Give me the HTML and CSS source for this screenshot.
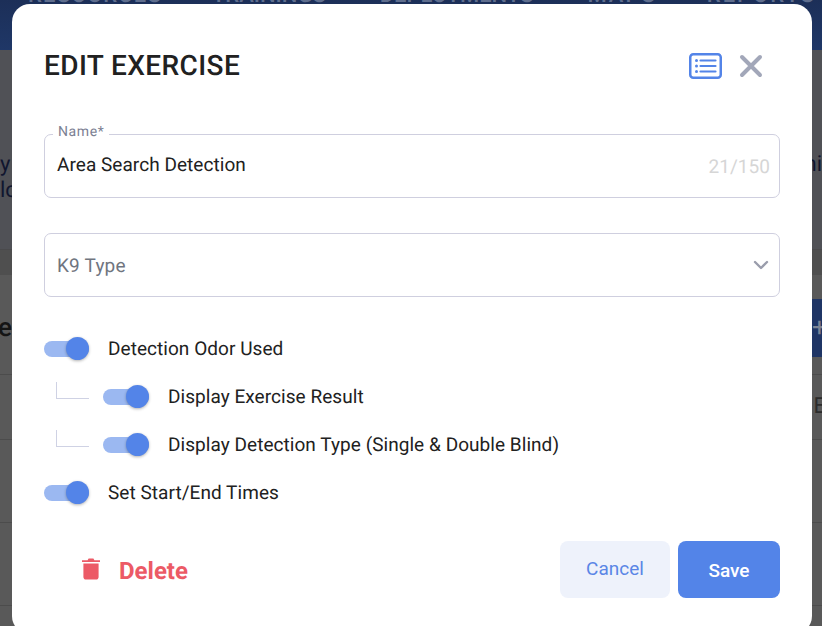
FILE: index.html
```html
<!DOCTYPE html>
<html lang="en">
<head>
    <meta charset="UTF-8">
    <meta name="viewport" content="width=device-width, initial-scale=1.0">
    <title>Edit Exercise</title>
    <link rel="stylesheet" href="styles.css">
</head>
<body>
    <div class="page">
        <header class="topbar">
            <span class="navItem nav1">RESOURCES</span>
            <span class="navItem nav2">TRAININGS</span>
            <span class="navItem nav3">DEPLOYMENTS</span>
            <span class="navItem nav4">MAPS</span>
            <span class="navItem nav5">REPORTS</span>
        </header>
        <section class="banner">
            <div class="bannerRow rowOne"><span>y</span><span class="clipRight">ni</span></div>
            <div class="bannerRow"><span>lc</span></div>
        </section>
        <section class="tableHead">
            <span class="sectionTitle">er</span>
            <span class="addBtn">+</span>
        </section>
        <div class="tableRow"><span></span><span class="cellEnd">E</span></div>
        <div class="tableRow short"></div>
        <div class="tableRow short"></div>
    </div>

    <div class="modal">
        <div class="modalHead">
            <h1>EDIT EXERCISE</h1>
            <div class="headIcons">
                <svg class="listIcon" width="33" height="26" viewBox="0 0 33 26" fill="none">
                    <rect x="1.25" y="1.25" width="30.5" height="23.5" rx="3" stroke="#5384e8" stroke-width="2.5"/>
                    <circle cx="7.5" cy="7.5" r="1.5" fill="#5384e8"/>
                    <circle cx="7.5" cy="13" r="1.5" fill="#5384e8"/>
                    <circle cx="7.5" cy="18.5" r="1.5" fill="#5384e8"/>
                    <path d="M11.5 7.5H26.5M11.5 13H26.5M11.5 18.5H26.5" stroke="#5384e8" stroke-width="2.2" stroke-linecap="round"/>
                </svg>
                <svg class="closeIcon" width="24" height="24" viewBox="0 0 24 24" fill="none">
                    <path d="M3 3L21 21M21 3L3 21" stroke="#a2a7b9" stroke-width="4" stroke-linecap="round"/>
                </svg>
            </div>
        </div>

        <div class="field nameField">
            <label class="floatLabel">Name*</label>
            <span class="fieldValue">Area Search Detection</span>
            <span class="counter">21/150</span>
        </div>

        <div class="field selectField">
            <span class="placeholder">K9 Type</span>
            <svg width="16" height="10" viewBox="0 0 16 10" fill="none">
                <path d="M2 2L8 8L14 2" stroke="#9a9dac" stroke-width="2.4" stroke-linecap="round" stroke-linejoin="round"/>
            </svg>
        </div>

        <div class="toggles">
            <div class="toggleRow">
                <span class="toggle"><span class="thumb"></span></span>
                <span class="toggleLabel">Detection Odor Used</span>
            </div>
            <div class="toggleRow sub">
                <span class="connector"></span>
                <span class="toggle"><span class="thumb"></span></span>
                <span class="toggleLabel">Display Exercise Result</span>
            </div>
            <div class="toggleRow sub">
                <span class="connector"></span>
                <span class="toggle"><span class="thumb"></span></span>
                <span class="toggleLabel">Display Detection Type (Single &amp; Double Blind)</span>
            </div>
            <div class="toggleRow">
                <span class="toggle"><span class="thumb"></span></span>
                <span class="toggleLabel">Set Start/End Times</span>
            </div>
        </div>

        <div class="modalFoot">
            <div class="deleteBtn">
                <svg width="18" height="23" viewBox="0 0 18 23" fill="#ec5a66">
                    <path d="M0 3.2H5.6L6.6 1.6H11.4L12.4 3.2H18V5H0Z"/>
                    <path d="M1.4 6.6H16.6V20C16.6 21.6 15.4 22.6 14 22.6H4C2.6 22.6 1.4 21.6 1.4 20Z"/>
                </svg>
                <span>Delete</span>
            </div>
            <div class="actions">
                <button class="btn cancelBtn">Cancel</button>
                <button class="btn saveBtn">Save</button>
            </div>
        </div>
    </div>
</body>
</html>
```

FILE: styles.css
```css
html,body{
    margin: 0;
    padding: 0;
    height: 100%;
    overflow: hidden;
    background: #595959;
    font-family: Roboto, "Liberation Sans", sans-serif;
    text-rendering: geometricPrecision;
}
.page{
    height: 626px;
    overflow: hidden;
}
.topbar{
    height: 50px;
    background: linear-gradient(#1c2f58, #1f3767);
    display: flex;
    overflow: hidden;
}
.navItem{
    position: relative;
    top: -17px;
    font-size: 22px;
    line-height: 26px;
    font-weight: 500;
    color: #5f6e8e;
    white-space: nowrap;
}
.nav1{ margin-left: 28px; letter-spacing: 1.2px; }
.nav2{ margin-left: 50px; }
.nav3{ margin-left: 54px; }
.nav4{ margin-left: 54px; letter-spacing: 2px; }
.nav5{ margin-left: 50px; letter-spacing: 2px; }
.banner{
    height: 200px;
    background: #505156;
    border-bottom: 1px solid #4a4a4c;
    box-sizing: border-box;
    font-size: 22px;
    line-height: 26px;
    color: #10162f;
    padding-top: 102px;
}
.bannerRow{
    display: flex;
    justify-content: space-between;
}
.tableHead{
    height: 125px;
    box-sizing: border-box;
    background: linear-gradient(#4f4f4f 0, #4f4f4f 25px, #595959 25px);
    border-bottom: 1px solid #4c4c4c;
    display: flex;
    justify-content: space-between;
    padding-top: 49px;
}
.sectionTitle{
    margin-left: -2px;
    font-size: 26px;
    line-height: 58px;
    font-weight: 500;
    color: #151515;
}
.addBtn{
    width: 10px;
    height: 58px;
    background: #1f3565;
    color: #7c8494;
    font-size: 26px;
    line-height: 58px;
    overflow: hidden;
}
.tableRow{
    height: 65px;
    box-sizing: border-box;
    border-bottom: 1px solid #4c4c4c;
    display: flex;
    justify-content: space-between;
    font-size: 22px;
    line-height: 64px;
    color: #2c2c2c;
}
.tableRow.short{
    height: 83px;
}
.cellEnd{
    margin-right: -4px;
}

/* dialog over the page */
.modal{
    position: absolute;
    left: 12px;
    top: 4px;
    width: 800px;
    height: 630px;
    box-sizing: border-box;
    padding: 36px 32px 0;
    background: #fff;
    border-radius: 18px;
    color: #212121;
}
.modalHead{
    height: 50px;
    display: flex;
    justify-content: space-between;
    align-items: center;
}
h1{
    margin: 0;
    font-size: 28px;
    font-weight: 500;
    letter-spacing: 0.4px;
    color: #212121;
}
.headIcons{
    display: flex;
    align-items: center;
    gap: 17px;
    margin: 2px 17px 0 0;
}
.field{
    height: 64px;
    box-sizing: border-box;
    border: 1px solid #cfcfdf;
    border-radius: 7px;
    display: flex;
    justify-content: space-between;
    align-items: center;
    padding: 0 9px 0 12px;
    position: relative;
    font-size: 19px;
    letter-spacing: 0.05px;
}
.nameField{
    margin-top: 44px;
    padding-bottom: 4px;
}
.selectField{
    margin-top: 35px;
    padding-right: 10px;
}
.floatLabel{
    position: absolute;
    left: 8px;
    top: -11px;
    padding: 0 5px;
    background: #fff;
    font-size: 14px;
    line-height: 16px;
    color: #7b7f93;
    letter-spacing: 0.6px;
}
.fieldValue{
    color: #212121;
}
.counter{
    color: #d6d6d6;
    padding-top: 5px;
}
.placeholder{
    color: #70757f;
    letter-spacing: 0.2px;
    padding-top: 1px;
}
.toggles{
    margin-top: 28px;
}
.toggleRow{
    height: 48px;
    display: flex;
    align-items: center;
    gap: 19px;
    font-size: 19px;
    letter-spacing: 0.05px;
    color: #212121;
}
.toggleLabel{
    margin-top: -1px;
}
.toggleRow.sub{
    padding-left: 12px;
}
.connector{
    align-self: flex-start;
    width: 32px;
    height: 16px;
    margin-top: 9px;
    margin-right: -5px;
    border-left: 1px solid #cfd2e4;
    border-bottom: 1px solid #cfd2e4;
}
.toggle{
    width: 45px;
    height: 16px;
    border-radius: 8px;
    background: #9bb8f1;
    position: relative;
    flex-shrink: 0;
}
.sub .toggle{
    width: 46px;
}
.thumb{
    position: absolute;
    right: 0;
    top: -4px;
    width: 23px;
    height: 23px;
    border-radius: 50%;
    background: #5384e8;
    box-shadow: 0 1px 3px rgba(0, 0, 0, 0.3);
}
.modalFoot{
    margin-top: 24px;
    display: flex;
    justify-content: space-between;
    align-items: center;
}
.deleteBtn{
    display: flex;
    align-items: center;
    gap: 19px;
    margin-left: 38px;
    color: #ec5a66;
    font-size: 24px;
    font-weight: 700;
}
.deleteBtn span{
    margin-top: 2px;
}
.deleteBtn svg{
    margin-top: -3px;
}
.actions{
    display: flex;
    gap: 8px;
}
.btn{
    height: 57px;
    border: 0;
    border-radius: 8px;
    font-family: inherit;
    font-size: 19px;
}
.cancelBtn{
    width: 110px;
    padding-bottom: 4px;
    background: #eef2fb;
    color: #5a86e6;
}
.saveBtn{
    width: 102px;
    padding-top: 2px;
    background: #5384e8;
    color: #fff;
    font-weight: 500;
}
```
